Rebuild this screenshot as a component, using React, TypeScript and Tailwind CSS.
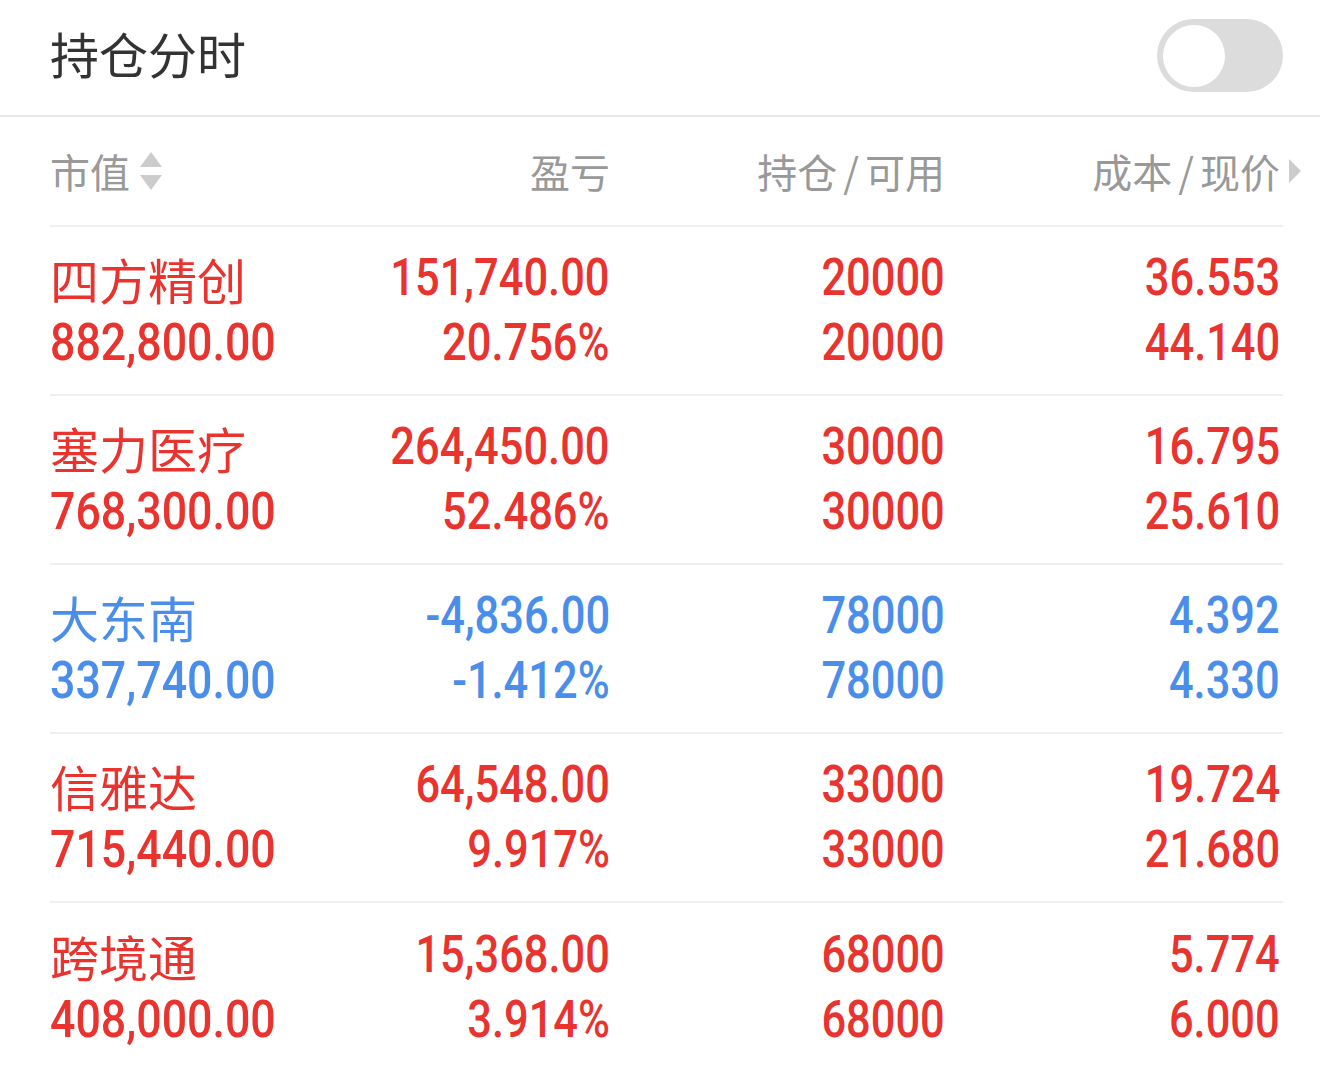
import React from 'react';

interface Holding {
  name: string;
  marketValue: string;
  profit: string;
  profitPct: string;
  position: string;
  available: string;
  cost: string;
  price: string;
  up: boolean;
}

const holdings: Holding[] = [
  { name: '四方精创', marketValue: '882,800.00', profit: '151,740.00', profitPct: '20.756%', position: '20000', available: '20000', cost: '36.553', price: '44.140', up: true },
  { name: '塞力医疗', marketValue: '768,300.00', profit: '264,450.00', profitPct: '52.486%', position: '30000', available: '30000', cost: '16.795', price: '25.610', up: true },
  { name: '大东南', marketValue: '337,740.00', profit: '-4,836.00', profitPct: '-1.412%', position: '78000', available: '78000', cost: '4.392', price: '4.330', up: false },
  { name: '信雅达', marketValue: '715,440.00', profit: '64,548.00', profitPct: '9.917%', position: '33000', available: '33000', cost: '19.724', price: '21.680', up: true },
  { name: '跨境通', marketValue: '408,000.00', profit: '15,368.00', profitPct: '3.914%', position: '68000', available: '68000', cost: '5.774', price: '6.000', up: true },
];

const cjk = "font-['Noto_Sans_CJK_SC',sans-serif]";

// condensed digits: Roboto medium squeezed horizontally
function Num({ value, left = false }: { value: string; left?: boolean }) {
  return (
    <span className="h-[65px] flex items-center">
      <span
        className={`inline-block font-['Roboto',sans-serif] font-medium text-[52px] leading-none ${left ? 'origin-left scale-x-[0.86]' : 'origin-right scale-x-[0.835]'}`}
      >
        {value}
      </span>
    </span>
  );
}

export default function App() {
  return (
    <div className={`w-[1320px] h-[1070px] bg-white overflow-hidden ${cjk}`}>
      {/* top bar */}
      <div className="h-[117px] flex items-center justify-between pl-[50px] pr-[37px] border-b-2 border-[#e8e8e8]">
        <span className="text-[49px] leading-none text-[#333333] -mt-[10px]">持仓分时</span>
        <div className="w-[126px] h-[73px] -mt-[4px] rounded-full bg-[#dcdcdc] p-[6px] flex items-center">
          <div className="w-[62px] h-[62px] rounded-full bg-white" />
        </div>
      </div>

      <div className="pl-[50px] pr-[37px]">
        {/* column header */}
        <div className="h-[110px] grid grid-cols-[250px_310px_335px_335px] items-center text-[40px] leading-none text-[#999999] border-b-2 border-[#efefef]">
          <div className="flex items-center">
            <span>市值</span>
            <svg width="24" height="42" viewBox="0 0 24 42" className="ml-[9px]">
              <polygon points="12,2 23,17 1,17" fill="#cccccc" />
              <polygon points="1,25 23,25 12,40" fill="#cccccc" />
            </svg>
          </div>
          <div className="text-right">盈亏</div>
          <div className="text-right">持仓<span className="mx-[6px]">/</span>可用</div>
          <div className="text-right relative">
            成本<span className="mx-[6px]">/</span>现价
            <svg width="14" height="26" viewBox="0 0 14 26" className="absolute -right-[22px] top-1/2 -translate-y-1/2">
              <polygon points="1,1 13,13 1,25" fill="#cccccc" />
            </svg>
          </div>
        </div>

        {holdings.map((h, i) => {
          const color = h.up ? 'text-[#e8332f]' : 'text-[#4a8eea]';
          return (
            <div
              key={h.name}
              className={`h-[169px] grid grid-cols-[250px_310px_335px_335px] items-center ${color} ${i < holdings.length - 1 ? 'border-b-2 border-[#efefef]' : ''}`}
            >
              <div className="flex flex-col">
                <span className="h-[65px] flex items-center text-[49px] leading-none">{h.name}</span>
                <Num value={h.marketValue} left />
              </div>
              <div className="flex flex-col items-end">
                <Num value={h.profit} />
                <Num value={h.profitPct} />
              </div>
              <div className="flex flex-col items-end">
                <Num value={h.position} />
                <Num value={h.available} />
              </div>
              <div className="flex flex-col items-end">
                <Num value={h.cost} />
                <Num value={h.price} />
              </div>
            </div>
          );
        })}
      </div>
    </div>
  );
}
